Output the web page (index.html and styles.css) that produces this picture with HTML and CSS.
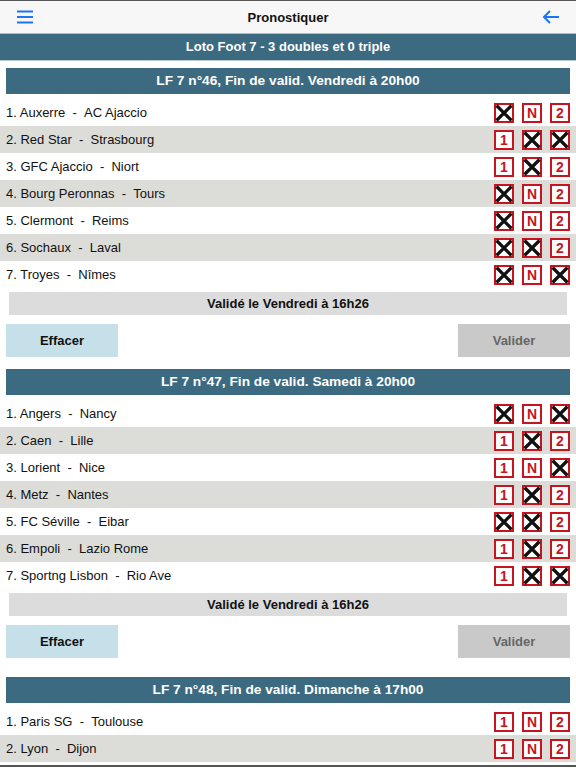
FILE: index.html
```html
<!DOCTYPE html>
<html lang="fr">
<head>
    <meta charset="UTF-8">
    <meta name="viewport" content="width=device-width, initial-scale=1.0">
    <title>Pronostiquer</title>
    <link rel="stylesheet" href="styles.css">
</head>
<body>
    <div class="navbar">
        <svg class="nav-icon" width="18" height="14" viewBox="0 0 18 14">
            <path d="M1 1.5h16M1 7h16M1 12.5h16" stroke="#1a74f5" stroke-width="2" fill="none"/>
        </svg>
        <span class="nav-title">Pronostiquer</span>
        <svg class="nav-icon" width="18" height="14" viewBox="0 0 18 14">
            <path d="M17 7H2M8 1L2 7l6 6" stroke="#1a74f5" stroke-width="2" fill="none"/>
        </svg>
    </div>
    <div class="banner">Loto Foot 7 - 3 doubles et 0 triple</div>

    <div id="grids"></div>
    <div class="bottom-line"></div>

    <script>
        var grids = [
            {
                title: 'LF 7 n°46, Fin de valid. Vendredi à 20h00',
                valid: 'Validé le Vendredi à 16h26',
                matches: [
                    ['Auxerre', 'AC Ajaccio', 'x-n-2'],
                    ['Red Star', 'Strasbourg', '1-x-x'],
                    ['GFC Ajaccio', 'Niort', '1-x-2'],
                    ['Bourg Peronnas', 'Tours', 'x-n-2'],
                    ['Clermont', 'Reims', 'x-n-2'],
                    ['Sochaux', 'Laval', 'x-x-2'],
                    ['Troyes', 'Nîmes', 'x-n-x']
                ]
            },
            {
                title: 'LF 7 n°47, Fin de valid. Samedi à 20h00',
                valid: 'Validé le Vendredi à 16h26',
                matches: [
                    ['Angers', 'Nancy', 'x-n-x'],
                    ['Caen', 'Lille', '1-x-2'],
                    ['Lorient', 'Nice', '1-n-x'],
                    ['Metz', 'Nantes', '1-x-2'],
                    ['FC Séville', 'Eibar', 'x-x-2'],
                    ['Empoli', 'Lazio Rome', '1-x-2'],
                    ['Sportng Lisbon', 'Rio Ave', '1-x-x']
                ]
            },
            {
                title: 'LF 7 n°48, Fin de valid. Dimanche à 17h00',
                matches: [
                    ['Paris SG', 'Toulouse', '1-n-2'],
                    ['Lyon', 'Dijon', '1-n-2']
                ]
            }
        ];

        var cross = '<svg width="22" height="22" viewBox="0 0 22 22"><path d="M3.5 3.5L18.5 18.5M18.5 3.5L3.5 18.5" stroke="#111" stroke-width="3.2" fill="none"/></svg>';

        function box(value, label) {
            if (value === 'x') {
                return '<span class="box checked">' + cross + '</span>';
            }
            return '<span class="box">' + label + '</span>';
        }

        var html = '';
        grids.forEach(function (g) {
            html += '<div class="grid">';
            html += '<div class="grid-title">' + g.title + '</div>';
            g.matches.forEach(function (m, i) {
                var picks = m[2].split('-');
                html += '<div class="row">';
                html += '<span class="teams">' + (i + 1) + '. ' + m[0] + '&nbsp; - &nbsp;' + m[1] + '</span>';
                html += '<span class="boxes">' + box(picks[0], '1') + box(picks[1], 'N') + box(picks[2], '2') + '</span>';
                html += '</div>';
            });
            if (g.valid) {
                html += '<div class="valid">' + g.valid + '</div>';
                html += '<div class="actions"><button class="btn-clear">Effacer</button><button class="btn-valid">Valider</button></div>';
            }
            html += '</div>';
        });
        document.getElementById('grids').innerHTML = html;
    </script>
</body>
</html>
```

FILE: styles.css
```css
body {
    margin: 0;
    background: #fff;
    font-family: "Liberation Sans", Arial, sans-serif;
    font-size: 13px;
    color: #111;
    border-top: 1px solid #555;
    height: 767px;
    overflow: hidden;
}
.navbar {
    height: 32px;
    background: #f7f7f7;
    border-bottom: 1px solid #b8b8b8;
    display: flex;
    align-items: center;
    justify-content: space-between;
    padding: 0 16px;
}
.nav-title {
    font-weight: bold;
    font-size: 13px;
}
.banner {
    height: 26px;
    line-height: 26px;
    background: #3c6a81;
    color: #fff;
    font-weight: bold;
    text-align: center;
    border-bottom: 1px solid #b8cbd4;
}
.grid {
    padding-top: 7px;
    margin-bottom: 5px;
}
.grid:nth-child(2) {
    margin-bottom: 12px;
}
.grid-title {
    margin: 0 6px 5px;
    height: 26px;
    line-height: 26px;
    background: #3c6a81;
    color: #fff;
    font-weight: bold;
    font-size: 13.7px;
    text-align: center;
}
.row {
    height: 27px;
    display: flex;
    align-items: center;
    justify-content: space-between;
    padding: 0 6px;
    font-size: 13px;
}
.row:nth-child(odd) {
    background: #dcdcd8;
}
.boxes {
    display: flex;
    gap: 8px;
}
.box {
    width: 16px;
    height: 16px;
    border: 2px solid #c8141e;
    color: #c8141e;
    font-weight: bold;
    font-size: 14px;
    line-height: 16px;
    text-align: center;
    position: relative;
    background: #fff;
}
.box svg {
    position: absolute;
    left: -3px;
    top: -3px;
}
.valid {
    margin: 4px 9px 0;
    height: 23px;
    line-height: 23px;
    background: #dcdcdc;
    text-align: center;
    font-weight: bold;
}
.actions {
    display: flex;
    justify-content: space-between;
    padding: 9px 6px 0;
}
.actions button {
    width: 112px;
    height: 33px;
    border: none;
    font-family: inherit;
    font-weight: bold;
    font-size: 13px;
}
.btn-clear {
    background: #c6e0ea;
    color: #111;
}
.btn-valid {
    background: #c9c9c9;
    color: #666;
}
.bottom-line {
    position: fixed;
    left: 0;
    right: 0;
    top: 765px;
    height: 2px;
    background: #555;
}
```
